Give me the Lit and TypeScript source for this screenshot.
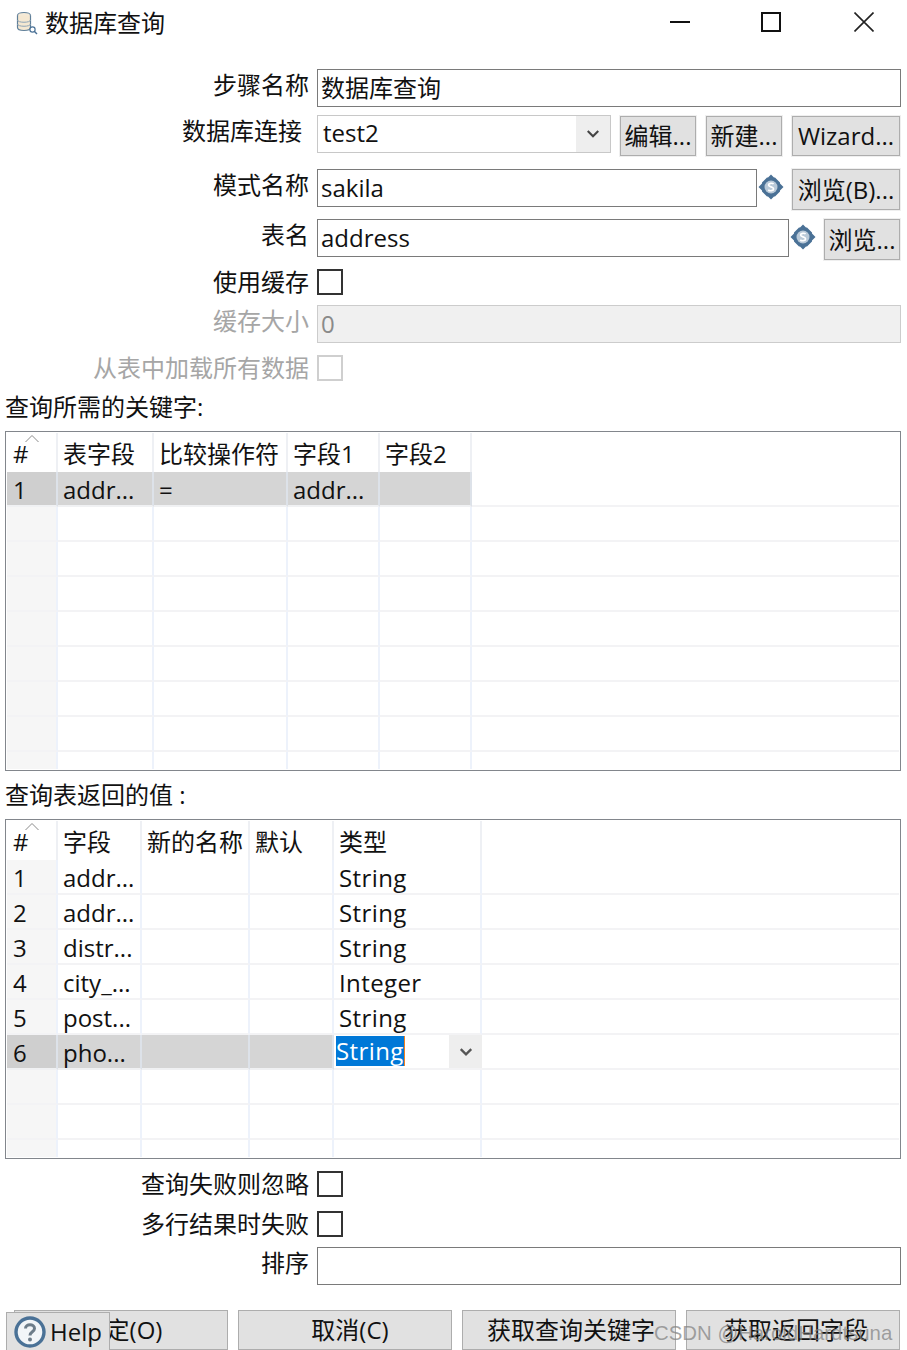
import { LitElement, html, css } from "lit";
import { customElement, property } from "lit/decorators.js";

const FONT = css`"Open Sans", "Noto Sans CJK SC", sans-serif`;

const chevron = (size: number, color: string, sw: number) => html`<svg width=${size} height=${size} viewBox="0 0 12 12"><path d="M1.5 3.5 L6 8 L10.5 3.5" fill="none" stroke=${color} stroke-width=${sw}/></svg>`;

const dollar = html`<svg class="dollar" width="26" height="26" viewBox="0 0 26 26">
  <path d="M13 0.5 L16 3.5 H17 L22 8.5 V9.5 L25.5 13 L22 16.5 V17.5 L17 22.5 H16 L13 25.5 L10 22.5 H9 L4 17.5 V16.5 L0.5 13 L4 9.5 V8.5 L9 3.5 H10 Z" fill="#4a7196"/>
  <circle cx="13" cy="13" r="6.5" fill="#b9c9d8"/>
  <path d="M15.6 10 C14.4 8.8 10.6 9 10.6 11 C10.6 13.4 15.6 12.4 15.6 15 C15.6 17 11.8 17.2 10.2 16" fill="none" stroke="#fff" stroke-width="1.7"/>
</svg>`;

@customElement("grid-table")
class GridTable extends LitElement {
  @property({ type: Array }) cols: number[] = [];
  @property({ type: Array }) heads: string[] = [];
  @property({ type: Array }) rows: string[][] = [];
  @property({ type: Number }) selected = -1;
  @property({ type: Boolean }) editor = false;

  static styles = css`
    :host { display: block; height: 340px; box-sizing: border-box; border: 1px solid #82868c; background: #fff; padding: 1px; overflow: hidden; font-family: ${FONT}; font-size: 24px; color: #111; }
    .head { height: 39px; line-height: 42px; padding-left: 5px; white-space: nowrap; box-sizing: border-box; border-right: 2px solid #eef0f4; position: relative; overflow: hidden; }
    .head:first-child { padding-left: 6px; }
    .cell { height: 35px; line-height: 36px; padding-left: 5px; white-space: nowrap; box-sizing: border-box; border-right: 2px solid #edf2fb; border-bottom: 2px solid #f3f3f5; overflow: hidden; position: relative; }
    .fill { border-right: none; padding: 0; }
    .num { background: #f6f6f6; border-right-color: #edf2fb; padding-left: 6px; }
    .sel { background: #d5d5d5; border-right-color: #dde2e9; border-bottom-color: #f0f1f3; }
    .sel.num { background: #cfcfcf; }
    .sel.fill { background: #fff; border-bottom-color: #f3f3f5; }
    .type { letter-spacing: 0.4px; }
    .caret { position: absolute; left: 18px; top: 1px; }
    .wrap { display: grid; grid-template-rows: 39px 1fr; height: 336px; }
    .body { display: grid; grid-auto-rows: 35px; overflow: hidden; align-content: start; }
    .head-grid { display: grid; }
    .ed { display: block; background: #fff; padding-left: 2px; border-right: none; }
    .ed .mark { display: inline-block; height: 30px; line-height: 29px; background: #0078d7; color: #fff; border-right: 1px solid #f08020; vertical-align: top; margin-top: 1px; }
    .ed .arrow { position: absolute; right: 0; top: 0; width: 33px; height: 33px; background: #eeeeee; display: flex; align-items: center; justify-content: center; }
  `;

  render() {
    const tpl = this.cols.map((c) => `${c}px`).join(" ") + " 1fr";
    const blank = 9 - this.rows.length;
    const all = [...this.rows, ...Array(Math.max(blank, 0)).fill(this.cols.map(() => ""))];
    const last = this.cols.length - 1;
    return html`<div class="wrap">
      <div class="head-grid" style="grid-template-columns:${tpl}">
        ${this.heads.map((h, i) => html`<div class="head">${h}${i === 0 ? html`<svg class="caret" width="14" height="10" viewBox="0 0 14 10"><path d="M0.5 8 L7 1.5 L13.5 8" fill="none" stroke="#8a8a8a" stroke-width="1"/></svg>` : ""}</div>`)}
      </div>
      <div class="body" style="grid-template-columns:${tpl}">
        ${all.map((r, ri) => {
          const isSel = ri === this.selected;
          return html`${r.map((v, ci) => {
            if (this.editor && isSel && ci === last) {
              return html`<div class="cell ed"><span class="mark type">${v}</span><span class="arrow">${chevron(14, "#555", 2)}</span></div>`;
            }
            return html`<div class="cell ${ci === 0 ? "num" : ""} ${isSel ? "sel" : ""} ${this.editor && ci === last ? "type" : ""}">${v}</div>`;
          })}<div class="cell fill"></div>`;
        })}
      </div>
    </div>`;
  }
}

@customElement("app-root")
class AppRoot extends LitElement {
  static styles = css`
    :host { display: block; width: 907px; height: 1350px; overflow: hidden; position: relative; background: #fff; font-family: ${FONT}; font-size: 24px; color: #111; }
    .title { display: flex; align-items: center; height: 46px; box-sizing: border-box; padding-left: 16px; }
    .title .name { margin-left: 7px; line-height: 44px; }
    .win { margin-left: auto; display: flex; height: 44px; align-items: center; align-self: flex-start; }
    .win svg { display: block; }
    .win .min { margin-right: 71px; }
    .win .max { margin-right: 73px; }
    .win .cls { margin-right: 33px; }
    .form { padding-top: 23px; }
    .row { display: flex; align-items: flex-start; }
    .h46 { height: 46px; } .h54 { height: 54px; } .h50 { height: 50px; } .h36 { height: 36px; } .h40 { height: 40px; } .h38 { height: 38px; }
    .label { width: 309px; margin-right: 8px; text-align: right; line-height: 32px; white-space: nowrap; flex: none; }
    .label.off { color: #a6a6a6; }
    .label.narrow { width: 302px; margin-right: 15px; }
    .label.chk { line-height: 25px; }
    .input { box-sizing: border-box; height: 38px; border: 1px solid #7a7a7a; line-height: 35px; padding-left: 3px; white-space: nowrap; background: #fff; }
    .w584 { width: 584px; } .w440 { width: 440px; } .w472 { width: 472px; }
    .input.dis { background: #f0f0f0; border-color: #cccccc; color: #8a8a8a; }
    .combo { box-sizing: border-box; width: 294px; height: 38px; border: 1px solid #c8c8c8; display: flex; line-height: 33px; padding-left: 5px; }
    .combo .val { flex: 1; }
    .combo .arr { width: 34px; background: #eeeeee; display: flex; align-items: center; justify-content: center; }
    .btn { box-sizing: border-box; background: #e1e1e1; border: 1px solid #adadad; outline: 1px solid #efefef; white-space: nowrap; text-align: center; }
    .b76 { width: 76px; height: 40px; line-height: 38px; margin-left: 9px; margin-top: 1px; }
    .b76 + .b76, .b76 + .b108 { margin-left: 10px; }
    .b108 { width: 108px; height: 40px; line-height: 38px; margin-top: 1px; }
    .b2 { width: 108px; height: 41px; line-height: 39px; margin-left: 8px; }
    .b3 { width: 76px; height: 41px; line-height: 39px; margin-left: 8px; }
    .dollar { margin-left: 1px; margin-top: 5px; flex: none; }
    .check { box-sizing: border-box; width: 26px; height: 26px; border: 2px solid #333; background: #fff; flex: none; }
    .check.off { border-color: #cfcfcf; }
    .sect { padding-left: 5px; white-space: nowrap; }
    .s1 { height: 36px; line-height: 24px; }
    .s2 { height: 48px; line-height: 48px; }
    .table-wrap { padding-left: 5px; padding-right: 6px; }
    .after { padding-top: 12px; }
    .foot { display: grid; grid-template-columns: repeat(4, 214px); column-gap: 10px; padding-left: 14px; margin-top: 25px; }
    .foot .btn { height: 40px; line-height: 38px; outline: none; }
    .foot .p2 { padding-left: 2px; } .foot .p10 { padding-left: 10px; } .foot .p4 { padding-left: 4px; } .foot .p6 { padding-left: 6px; }
    .help { position: absolute; left: 6px; top: 1312px; width: 104px; height: 38px; box-sizing: border-box; background: #e1e1e1; border: 1px solid #adadad; border-bottom: none; display: flex; align-items: center; padding-left: 7px; }
    .help span { margin-left: 4px; line-height: 36px; }
    .wm { position: absolute; left: 654px; top: 1320px; font-family: "Liberation Sans", Arial, sans-serif; font-size: 20.4px; line-height: 26px; color: rgba(130,130,130,0.72); white-space: nowrap; }
  `;

  render() {
    return html`
      <div class="title">
        <svg width="22" height="24" viewBox="0 0 22 24">
          <ellipse cx="8" cy="4.5" rx="6.5" ry="3" fill="#f5ead8" stroke="#5f7f99" stroke-width="1.2"/>
          <path d="M1.5 4.5 V16.5 C1.5 20.5 14.5 20.5 14.5 16.5 V4.5" fill="#f5e8d2" stroke="#5f7f99" stroke-width="1.2"/>
          <path d="M1.5 9 C1.5 12 14.5 12 14.5 9 M1.5 13 C1.5 16 14.5 16 14.5 13" fill="none" stroke="#8fa5b7" stroke-width="1"/>
          <circle cx="16.5" cy="18.5" r="2.6" fill="#fff" stroke="#4a7196" stroke-width="1.2"/>
          <path d="M18.5 20.5 L21 23" stroke="#4a7196" stroke-width="1.4"/>
        </svg>
        <span class="name">数据库查询</span>
        <div class="win">
          <svg class="min" width="20" height="20" viewBox="0 0 20 20"><path d="M0 10 H20" stroke="#111" stroke-width="2"/></svg>
          <svg class="max" width="20" height="20" viewBox="0 0 20 20"><rect x="1" y="1" width="18" height="18" fill="none" stroke="#111" stroke-width="2"/></svg>
          <svg class="cls" width="20" height="20" viewBox="0 0 20 20"><path d="M0.5 0.5 L19.5 19.5 M19.5 0.5 L0.5 19.5" stroke="#222" stroke-width="1.6"/></svg>
        </div>
      </div>

      <div class="form">
        <div class="row h46"><div class="label">步骤名称</div><div class="input w584">数据库查询</div></div>
        <div class="row h54">
          <div class="label narrow">数据库连接</div>
          <div class="combo"><span class="val">test2</span><span class="arr">${chevron(14, "#444", 1.8)}</span></div>
          <div class="btn b76">编辑...</div>
          <div class="btn b76">新建...</div>
          <div class="btn b108">Wizard...</div>
        </div>
        <div class="row h50">
          <div class="label">模式名称</div><div class="input w440">sakila</div>
          ${dollar}
          <div class="btn b2">浏览(B)...</div>
        </div>
        <div class="row h50">
          <div class="label">表名</div><div class="input w472">address</div>
          ${dollar}
          <div class="btn b3">浏览...</div>
        </div>
        <div class="row h36"><div class="label chk">使用缓存</div><div class="check"></div></div>
        <div class="row h50"><div class="label off">缓存大小</div><div class="input w584 dis">0</div></div>
        <div class="row h40"><div class="label chk off">从表中加载所有数据</div><div class="check off"></div></div>
      </div>

      <div class="sect s1">查询所需的关键字:</div>
      <div class="table-wrap">
        <grid-table
          .cols=${[51, 96, 134, 92, 92]}
          .heads=${["#", "表字段", "比较操作符", "字段1", "字段2"]}
          .rows=${[["1", "addr...", "=", "addr...", ""]]}
          .selected=${0}
        ></grid-table>
      </div>

      <div class="sect s2">查询表返回的值 :</div>
      <div class="table-wrap">
        <grid-table
          .cols=${[51, 84, 108, 84, 148]}
          .heads=${["#", "字段", "新的名称", "默认", "类型"]}
          .rows=${[
            ["1", "addr...", "", "", "String"],
            ["2", "addr...", "", "", "String"],
            ["3", "distr...", "", "", "String"],
            ["4", "city_...", "", "", "Integer"],
            ["5", "post...", "", "", "String"],
            ["6", "pho...", "", "", "String"],
          ]}
          .selected=${5}
          .editor=${true}
        ></grid-table>
      </div>

      <div class="after">
        <div class="row h40"><div class="label chk">查询失败则忽略</div><div class="check"></div></div>
        <div class="row h36"><div class="label chk">多行结果时失败</div><div class="check"></div></div>
        <div class="row h38"><div class="label">排序</div><div class="input w584"></div></div>
      </div>

      <div class="foot">
        <div class="btn p2">确定(O)</div>
        <div class="btn p10">取消(C)</div>
        <div class="btn p4">获取查询关键字</div>
        <div class="btn p6">获取返回字段</div>
      </div>

      <div class="help">
        <svg width="32" height="32" viewBox="0 0 32 32">
          <circle cx="16" cy="16" r="14" fill="#f2f5f8" stroke="#4a7196" stroke-width="3.4"/>
          <path d="M11.5 12.5 C11.5 7.5 20.5 7.5 20.5 12.5 C20.5 16 16 15.5 16 19.5" fill="none" stroke="#6d7c89" stroke-width="3"/>
          <circle cx="16" cy="23.5" r="2" fill="#6d7c89"/>
        </svg>
        <span>Help</span>
      </div>
      <div class="wm">CSDN @HaroldHardtsuna</div>
    `;
  }
}
